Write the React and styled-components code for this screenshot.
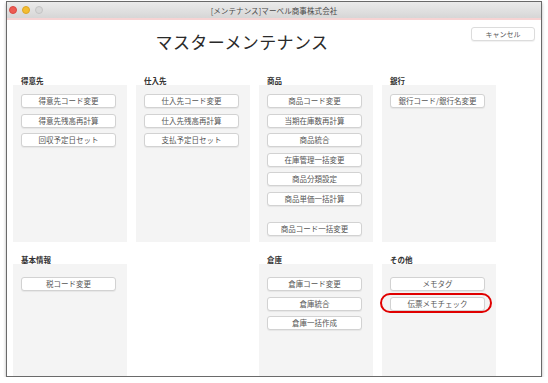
import styled, { createGlobalStyle } from "styled-components";

const GlobalStyle = createGlobalStyle`
  html, body {
    margin: 0;
    padding: 0;
    background: #ffffff;
  }
  body {
    font-family: "Noto Sans CJK JP", "Noto Sans", sans-serif;
  }
`;

const sections = [
  {
    name: "得意先",
    buttons: ["得意先コード変更", "得意先残高再計算", "回収予定日セット"],
  },
  {
    name: "仕入先",
    buttons: ["仕入先コード変更", "仕入先残高再計算", "支払予定日セット"],
  },
  {
    name: "商品",
    buttons: [
      "商品コード変更",
      "当期在庫数再計算",
      "商品統合",
      "在庫管理一括変更",
      "商品分類設定",
      "商品単価一括計算",
    ],
    extra: "商品コード一括変更",
  },
  { name: "銀行", buttons: ["銀行コード/銀行名変更"] },
  { name: "基本情報", buttons: ["税コード変更"] },
  null,
  { name: "倉庫", buttons: ["倉庫コード変更", "倉庫統合", "倉庫一括作成"] },
  { name: "その他", buttons: ["メモタグ", "伝票メモチェック"], marked: "伝票メモチェック" },
];

const Window = styled.div`
  margin: 1px 6px 0 6px;
  width: 536px;
  height: 376px;
  box-sizing: border-box;
  border: 1px solid #6a6a6a;
  box-shadow: 0 2px 3px rgba(0, 0, 0, 0.3);
  display: flex;
  flex-direction: column;
  background: #ffffff;
`;

const TitleBar = styled.div`
  position: relative;
  height: 16px;
  flex: none;
  display: flex;
  align-items: center;
  justify-content: center;
  background: linear-gradient(#ebebeb, #d6d6d6);
  border-bottom: 2px solid #f6d3d3;
`;

const Lights = styled.div`
  position: absolute;
  left: 1px;
  top: 0;
  bottom: 0;
  display: flex;
  align-items: center;
  gap: 5px;
  padding-left: 1px;
`;

const Light = styled.span`
  width: 8px;
  height: 8px;
  border-radius: 50%;
  background: ${(p) => p.$color};
  box-sizing: border-box;
  border: 1px solid ${(p) => p.$edge};
`;

const WindowTitle = styled.div`
  font-size: 7.5px;
  color: #4a4a4a;
  letter-spacing: 0.1px;
`;

const Content = styled.div`
  flex: 1;
  display: flex;
  flex-direction: column;
  padding: 0 6px;
  min-height: 0;
`;

const HeaderRow = styled.div`
  height: 56px;
  flex: none;
  display: flex;
  align-items: flex-start;
`;

const Heading = styled.h1`
  flex: 1;
  margin: 12px 0 0 0;
  text-align: center;
  font-size: 17px;
  line-height: 20px;
  font-weight: 400;
  color: #2a2a2a;
  letter-spacing: 0.4px;
`;

const CancelButton = styled.button`
  margin: 7px 0 0 0;
  width: 64px;
  height: 14px;
  padding: 0;
  background: #fff;
  border: 1px solid #dcdcdc;
  border-radius: 3px;
  box-shadow: 0 1px 1px rgba(0, 0, 0, 0.06);
  font-family: inherit;
  font-size: 7px;
  color: #555;
`;

const Grid = styled.div`
  flex: 1;
  display: grid;
  grid-template-columns: repeat(4, 114px);
  grid-template-rows: auto 1fr;
  column-gap: 9px;
  row-gap: 13px;
  min-height: 0;
`;

const Section = styled.div`
  display: flex;
  flex-direction: column;
  min-height: 0;
`;

const Label = styled.div`
  height: 9px;
  line-height: 9px;
  font-size: 7.5px;
  font-weight: 700;
  color: #333;
  padding-left: 8px;
`;

const Panel = styled.div`
  background: #f4f4f4;
  height: ${(p) => (p.$top ? "157px" : "auto")};
  flex: ${(p) => (p.$top ? "none" : "1")};
  padding: ${(p) => (p.$top ? "9px" : "13px")} 9px 0 8px;
  box-sizing: border-box;
  display: flex;
  flex-direction: column;
  gap: 5.5px;
`;

const Button = styled.button`
  position: relative;
  width: 95px;
  height: 14px;
  flex: none;
  padding: 0;
  background: #fff;
  border: 1px solid #d2d2d2;
  border-radius: 3px;
  box-shadow: 0 1px 1px rgba(0, 0, 0, 0.06);
  font-family: inherit;
  font-size: 7.5px;
  line-height: 12px;
  color: #555;
  margin-top: ${(p) => (p.$spaced ? "11px" : "0")};
`;

const Marker = styled.span`
  position: absolute;
  top: -5px;
  bottom: -3px;
  left: -11px;
  right: -8px;
  border: 2.5px solid #e00000;
  border-radius: 10px;
  pointer-events: none;
`;

export default function App() {
  return (
    <>
      <GlobalStyle />
      <Window>
        <TitleBar>
          <Lights>
            <Light $color="#ee5b53" $edge="#d94a43" />
            <Light $color="#f4bd30" $edge="#dca526" />
            <Light $color="#d8d8d8" $edge="#c4c4c4" />
          </Lights>
          <WindowTitle>[メンテナンス]マーベル商事株式会社</WindowTitle>
        </TitleBar>
        <Content>
          <HeaderRow>
            <Heading>マスターメンテナンス</Heading>
            <CancelButton>キャンセル</CancelButton>
          </HeaderRow>
          <Grid>
            {sections.map((section, i) => {
              if (!section) return <div key={`empty${i}`} />;
              return (
                <Section key={section.name}>
                  <Label>{section.name}</Label>
                  <Panel $top={i < 4}>
                    {section.buttons.map((b) => (
                      <Button key={b}>
                        {b}
                        {section.marked === b && <Marker />}
                      </Button>
                    ))}
                    {section.extra && <Button $spaced>{section.extra}</Button>}
                  </Panel>
                </Section>
              );
            })}
          </Grid>
        </Content>
      </Window>
    </>
  );
}
